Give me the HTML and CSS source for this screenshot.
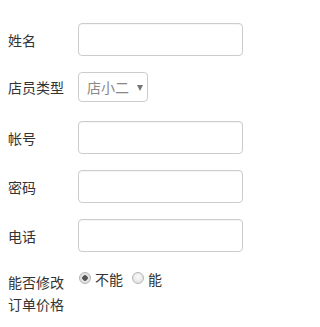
FILE: index.html
```html
<!DOCTYPE html>
<html lang="zh">
<head>
<meta charset="utf-8">
<link rel="stylesheet" href="styles.css">
</head>
<body>
<form class="form">
  <div class="row">
    <label class="label">姓名</label>
    <input class="field" type="text">
  </div>
  <div class="row row-select">
    <label class="label">店员类型</label>
    <div class="select-wrap">
      <select class="select"><option>店小二</option></select>
    </div>
  </div>
  <div class="row">
    <label class="label">帐号</label>
    <input class="field" type="text">
  </div>
  <div class="row">
    <label class="label">密码</label>
    <input class="field" type="password">
  </div>
  <div class="row">
    <label class="label">电话</label>
    <input class="field" type="text">
  </div>
  <div class="row row-radio">
    <label class="label label-multi">能否修改<br>订单价格</label>
    <div class="radios">
      <label class="radio-item"><input class="radio" type="radio" name="edit" checked>不能</label>
      <label class="radio-item"><input class="radio" type="radio" name="edit">能</label>
    </div>
  </div>
</form>
</body>
</html>
```

FILE: styles.css
```css
html, body {
  margin: 0;
  padding: 0;
  background: #fff;
}
body {
  font-family: "Noto Sans CJK SC", "Noto Sans", sans-serif;
  font-size: 14px;
  color: #333;
}
.form {
  padding: 23px 0 0 8px;
}
.row {
  display: flex;
  align-items: center;
  height: 33px;
  margin-bottom: 16px;
}
.label {
  width: 70px;
  flex: none;
  line-height: 20px;
}
.field {
  box-sizing: border-box;
  width: 165px;
  height: 33px;
  margin: 0;
  padding: 6px 10px;
  border: 1px solid #ccc;
  border-radius: 4px;
  box-shadow: inset 0 1px 1px rgba(0,0,0,0.04);
  font: inherit;
  outline: none;
}
.row-select {
  height: 30px;
  margin-bottom: 19px;
}
.select-wrap {
  position: relative;
  width: 70px;
  height: 30px;
}
.select-wrap::after {
  content: "";
  position: absolute;
  left: 59px;
  top: 13px;
  border-left: 3px solid transparent;
  border-right: 3px solid transparent;
  border-top: 6px solid #777;
  pointer-events: none;
}
.select {
  appearance: none;
  -webkit-appearance: none;
  box-sizing: border-box;
  width: 70px;
  height: 30px;
  margin: 0;
  padding: 0 0 0 8px;
  border: 1px solid #ccc;
  border-radius: 4px;
  background: #fff;
  color: #888;
  font: inherit;
  outline: none;
}
.row-radio {
  height: auto;
  align-items: flex-start;
}
.label-multi {
  margin-top: 3px;
  line-height: 22px;
}
.radios {
  display: flex;
  align-items: center;
  line-height: 22px;
}
.radio-item {
  display: inline-flex;
  align-items: center;
  margin-right: 8px;
}
.radio {
  appearance: none;
  -webkit-appearance: none;
  box-sizing: border-box;
  width: 12px;
  height: 12px;
  margin: 0 4px 0 1px;
  border: 1px solid #b5b5b5;
  border-radius: 50%;
  background: radial-gradient(circle at 50% 40%, #fafafa 0, #dcdcdc 100%);
  position: relative;
  top: -1px;
}
.radio:checked {
  background: radial-gradient(circle, #555 0, #555 2.5px, #e6e6e6 3px, #d8d8d8 100%);
}
```
